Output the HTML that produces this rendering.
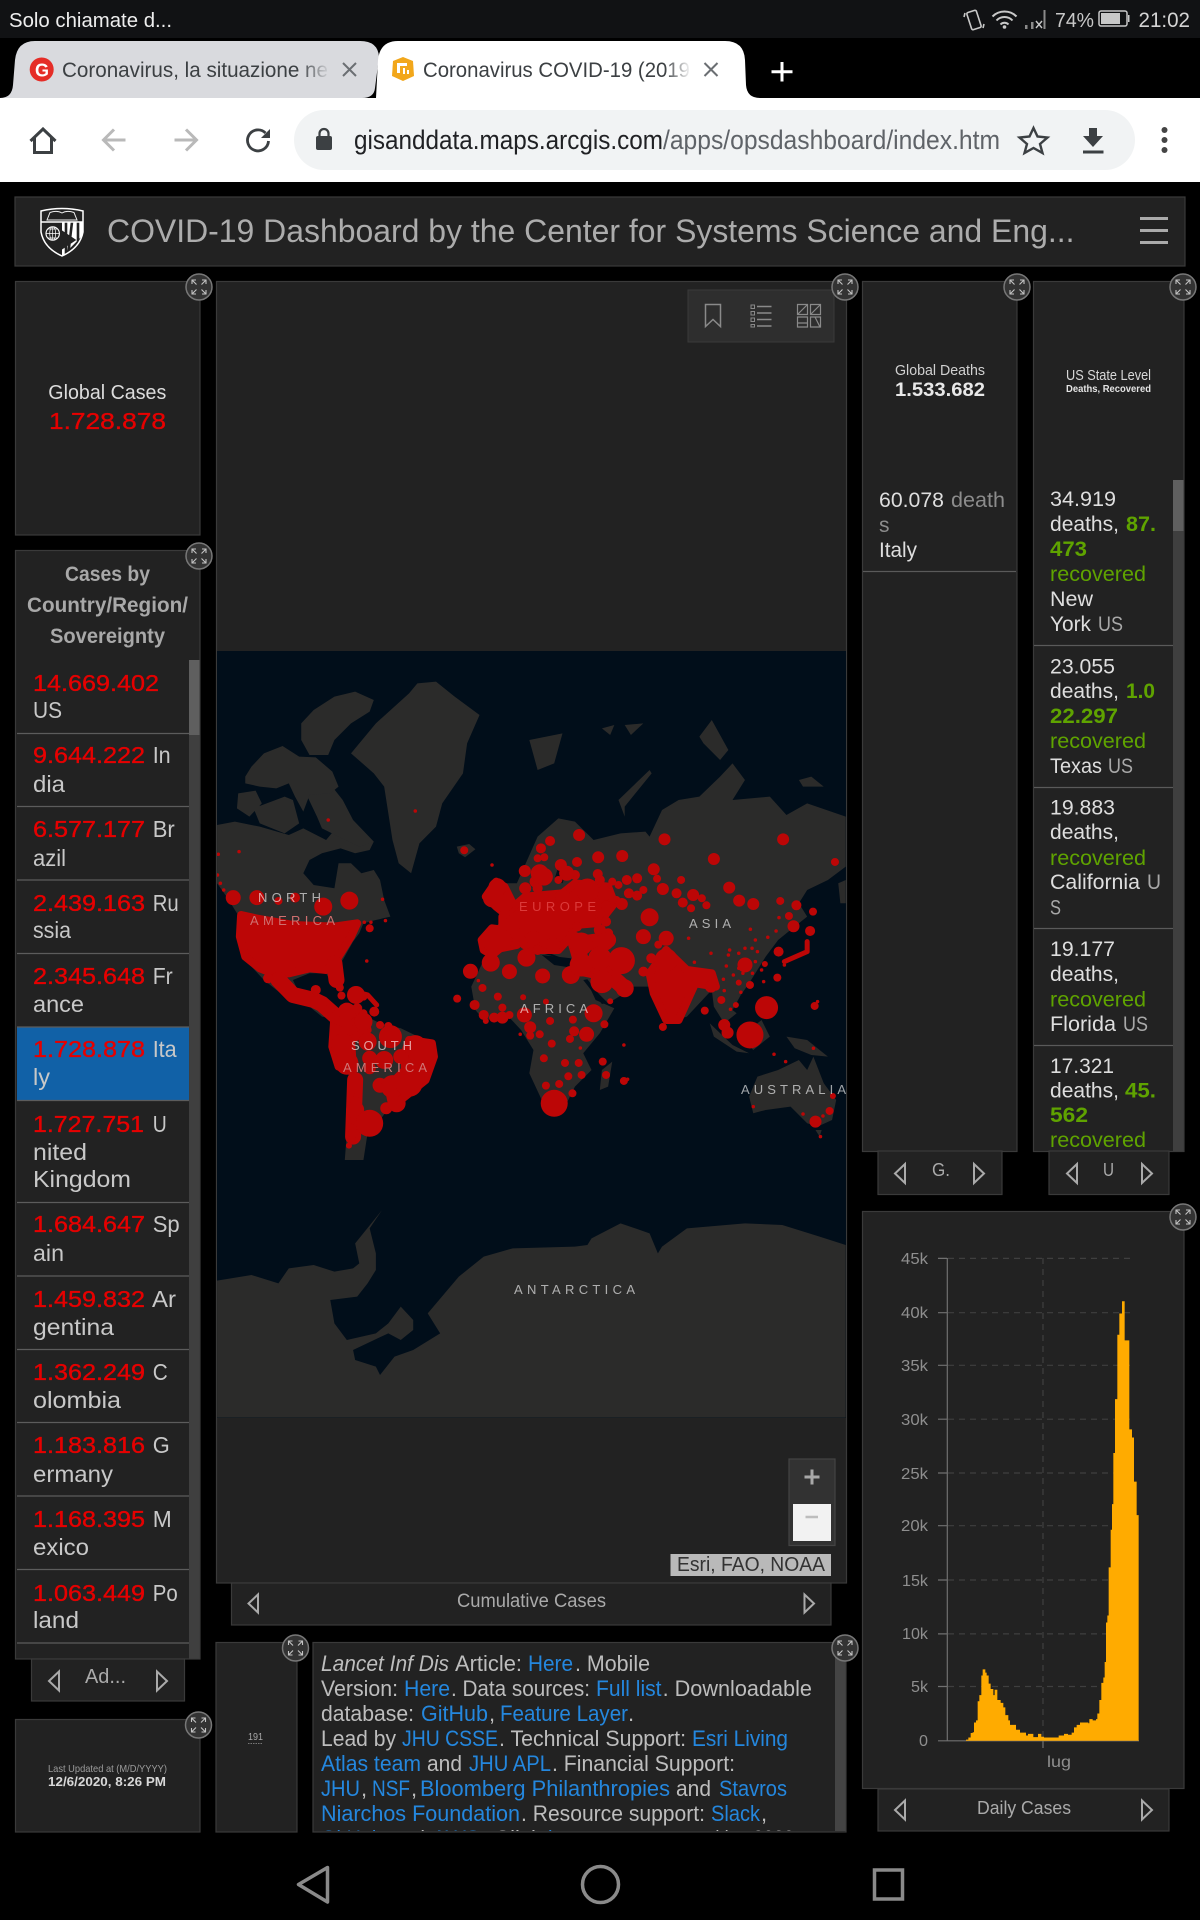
<!DOCTYPE html>
<html lang="it"><head><meta charset="utf-8"><title>COVID-19 Dashboard</title>
<style>
html,body{margin:0;padding:0;background:#000;width:1200px;height:1920px;overflow:hidden}
svg{display:block;position:absolute;left:0;top:0}
text{font-family:"Liberation Sans",sans-serif}
.p{fill:#222;stroke:#3a3a3a;stroke-width:1.2}
.n{font-size:23px;fill:#e60000;stroke:#e60000;stroke-width:.35}
.c{font-size:23px;fill:#c8c8c8}
.w{font-size:21px;fill:#dedede}
.g{font-size:21px;fill:#5fa300}
.gb{font-size:21px;fill:#5fa300;font-weight:bold}
.d{font-size:21px;fill:#a8a8a8}
.t{font-size:22px;fill:#bdbdbd}
.a{font-size:22px;fill:#2487de}
.l{font-size:13px;fill:rgba(255,255,255,.62)}
.y{font-size:16px;fill:#8f8f8f}
.ar{fill:none;stroke:#aaa;stroke-width:2}
.dots path{fill:none;stroke:#bc0606;stroke-linecap:round;stroke-linejoin:round;vector-effect:non-scaling-stroke}
</style></head><body>
<svg width="1200" height="1920" viewBox="0 0 1200 1920" xmlns="http://www.w3.org/2000/svg">
<defs>
<g id="ex"><circle r="13" fill="#333" stroke="#777" stroke-width="1.5"/><path d="M-2.5-2.5L-7-7M-7-3V-7H-3M2.5-2.5L7-7M3-7H7V-3M-2.5 2.5L-7 7M-7 3V7H-3M2.5 2.5L7 7M3 7H7V3" fill="none" stroke="#c4c4c4" stroke-width="1.1"/></g>
<clipPath id="mc"><rect x="217" y="651" width="629" height="767"/></clipPath>
<clipPath id="lc"><rect x="16" y="660" width="173" height="999"/></clipPath>
<clipPath id="uc"><rect x="1034" y="480" width="139" height="671"/></clipPath>
<clipPath id="tc"><rect x="314" y="1644" width="521" height="187"/></clipPath>
<clipPath id="sh"><path d="M41 211Q62 206 83 211L83 232Q80 248 62 256Q44 248 41 232Z"/></clipPath>
<linearGradient id="f1"><stop offset="0" stop-color="#d9dade" stop-opacity="0"/><stop offset="1" stop-color="#d9dade"/></linearGradient>
<linearGradient id="f2"><stop offset="0" stop-color="#fff" stop-opacity="0"/><stop offset="1" stop-color="#fff"/></linearGradient>
</defs>

<!-- status bar -->
<rect width="1200" height="38" fill="#111214"/>
<text x="9" y="27" font-size="20" fill="#eee" textLength="163" lengthAdjust="spacingAndGlyphs">Solo chiamate d...</text>
<g fill="none" stroke="#c8c8c8" stroke-width="1.6">
<rect x="969" y="11" width="10" height="18" rx="1.5" transform="rotate(-18 974 20)"/>
<path d="M965 13l-1 4M984 24l-1 4"/>
<path d="M992.5 16.5a17 17 0 0 1 24 0M996.5 20.5a11 11 0 0 1 16 0M1000.5 24.5a5.500 5.500 0 0 1 8 0" stroke-width="2"/>
</g>
<circle cx="1004.500" cy="27" r="1.800" fill="#c8c8c8"/>
<path d="M1025 25h2.500v4H1025zM1031 22h2.500v7H1031zM1043.500 10h2v19h-2z" fill="#8a8a8a"/>
<path d="M1036 21l6 7M1042 21l-6 7" stroke="#c8c8c8" stroke-width="1.400"/>
<text x="1055" y="27" font-size="20" fill="#c8c8c8" textLength="39" lengthAdjust="spacingAndGlyphs">74%</text>
<rect x="1099" y="11" width="28" height="15" rx="2" fill="none" stroke="#c8c8c8" stroke-width="1.500"/>
<rect x="1101" y="13" width="19" height="11" fill="#c8c8c8"/><rect x="1128" y="15" width="1.500" height="7" fill="#c8c8c8"/>
<text x="1138.500" y="27" font-size="21" fill="#d4d4d4" textLength="51.500" lengthAdjust="spacingAndGlyphs">21:02</text>

<!-- tabs -->
<path d="M0 98Q12 98 13 85L15 60Q17 41 35 41L360 41Q378 41 379 57L375 88Q374 98 362 98Z" fill="#d9dade"/>
<circle cx="41.700" cy="69.500" r="12" fill="#e52d27"/>
<text x="35" y="76.500" font-size="18" font-weight="bold" fill="#fff">G</text>
<text x="62" y="77" font-size="21.500" fill="#3c4043" textLength="266" lengthAdjust="spacingAndGlyphs">Coronavirus, la situazione ne</text>
<rect x="300" y="55" width="30" height="30" fill="url(#f1)"/>
<path d="M343 63l13 13M356 63l-13 13" stroke="#6b6f73" stroke-width="2"/>
<path d="M376 98L378 60Q380 41 398 41L725 41Q744 41 745 60L746 85Q747 98 760 98Z" fill="#fff"/>
<polygon points="403,57 413,61 414,76 403,81 392,76 393,61" fill="#f2a71b"/>
<path d="M397 63h10v3h-7v7h-3zM403 68h2v6h-2zM407 70h2v4h-2z" fill="#fff"/>
<text x="423" y="77" font-size="21.500" fill="#3c4043" textLength="267" lengthAdjust="spacingAndGlyphs">Coronavirus COVID-19 (2019</text>
<rect x="665" y="55" width="26" height="30" fill="url(#f2)"/>
<path d="M704.500 63l13 13M717.500 63l-13 13" stroke="#6b6f73" stroke-width="2"/>
<path d="M782 62v19.500M771.500 71.700h21" stroke="#fff" stroke-width="3"/>

<!-- toolbar -->
<rect y="98" width="1200" height="84" fill="#fff"/>
<path d="M30.500 141L43 129L55.500 141" fill="none" stroke="#3c4043" stroke-width="3"/>
<path d="M34.500 138V152.500H51.500V138" fill="none" stroke="#3c4043" stroke-width="3"/>
<path d="M125.500 140H105M114 129.500L103.500 140L114 150.500" fill="none" stroke="#b9b9b9" stroke-width="3"/>
<path d="M174.500 140H195M186 129.500L196.500 140L186 150.500" fill="none" stroke="#b9b9b9" stroke-width="3"/>
<path d="M265.500 133A10.500 10.500 0 1 0 268.500 141" fill="none" stroke="#3c4043" stroke-width="2.800"/>
<path d="M270 129v9h-9z" fill="#3c4043"/>
<rect x="294" y="110" width="841" height="60" rx="30" fill="#f1f3f4"/>
<rect x="316" y="136" width="16" height="14" rx="2" fill="#3c4043"/>
<path d="M319.500 136v-2.500a4.500 4.500 0 0 1 9 0V136" fill="none" stroke="#3c4043" stroke-width="2.200"/>
<text x="354" y="149" font-size="27" fill="#202124" textLength="309" lengthAdjust="spacingAndGlyphs">gisanddata.maps.arcgis.com</text>
<text x="663" y="149" font-size="27" fill="#5f6368" textLength="337" lengthAdjust="spacingAndGlyphs">/apps/opsdashboard/index.htm</text>
<polygon points="1033.500,128 1037.500,136.500 1047.500,137.500 1040,144 1042.500,153 1033.500,148 1024.500,153 1027,144 1019.500,137.500 1029.500,136.500" fill="none" stroke="#3c4043" stroke-width="2.400"/>
<path d="M1089 128h8v8h6l-10 11-10-11h6zM1083 150.500h20.500v3H1083z" fill="#3c4043"/>
<circle cx="1164.500" cy="130" r="3" fill="#444"/><circle cx="1164.500" cy="140" r="3" fill="#444"/><circle cx="1164.500" cy="150" r="3" fill="#444"/>

<!-- header -->
<rect x="15" y="197" width="1170" height="69" class="p"/>
<g clip-path="url(#sh)"><rect x="40" y="206" width="45" height="52" fill="#222"/>
<path d="M62 222h22v34H62z" fill="#fff"/>
<path d="M66 222v34M72 222l-4 34M78 222v34M62 232l12 8-12 8zM70 250l14-14v6l-12 14z" stroke="#222" stroke-width="2.600" fill="#222"/></g>
<path d="M41 211Q62 206 83 211L83 232Q80 248 62 256Q44 248 41 232Z" fill="none" stroke="#fff" stroke-width="1.500"/>
<path d="M41 222H83" stroke="#fff" stroke-width="1.500"/>
<path d="M47 220L50 212.500Q57 210 62 213Q67 210 74 212.500L77 220Z" fill="#222" stroke="#eee" stroke-width="1"/>
<circle cx="52.700" cy="233.500" r="6.700" fill="none" stroke="#fff" stroke-width="1.100"/>
<path d="M46 233.500h13.400M52.700 226.800v13.400M48 229h9.400M48 238h9.400" stroke="#fff" stroke-width=".7"/>
<ellipse cx="52.700" cy="233.500" rx="3" ry="6.700" fill="none" stroke="#fff" stroke-width=".7"/>
<text x="107" y="242" font-size="32" fill="#acacac" textLength="967.500" lengthAdjust="spacingAndGlyphs">COVID-19 Dashboard by the Center for Systems Science and Eng...</text>
<path d="M1140 218.500h28M1140 230.500h28M1140 242.500h28" stroke="#aaa" stroke-width="3"/>

<!-- global cases -->
<rect x="15.500" y="281.500" width="184.500" height="253.500" class="p"/>
<text x="48.300" y="399" font-size="20" fill="#dcdcdc" textLength="118" lengthAdjust="spacingAndGlyphs">Global Cases</text>
<text x="49" y="429" class="n" font-size="24" textLength="117" lengthAdjust="spacingAndGlyphs">1.728.878</text>

<!-- left list -->
<rect x="15.500" y="550.500" width="184.500" height="1108.500" class="p"/>
<text x="65" y="581" font-size="21" font-weight="bold" fill="#a8a8a8" textLength="85" lengthAdjust="spacingAndGlyphs">Cases by</text>
<text x="27" y="612" font-size="21" font-weight="bold" fill="#a8a8a8" textLength="161" lengthAdjust="spacingAndGlyphs">Country/Region/</text>
<text x="50" y="643" font-size="21" font-weight="bold" fill="#a8a8a8" textLength="115" lengthAdjust="spacingAndGlyphs">Sovereignty</text>
<rect x="189" y="660" width="10.500" height="998.500" fill="#3f3f3f"/><rect x="189" y="660" width="10.500" height="75" fill="#5f5f5f"/>
<rect x="17" y="1027" width="172" height="73.500" fill="#1161a7"/>
<path d="M17 733.500H189M17 806.500H189M17 880H189M17 953.500H189M17 1027H189M17 1100.500H189M17 1202.500H189M17 1276H189M17 1349.500H189M17 1422.500H189M17 1496H189M17 1569.500H189M17 1643H189" stroke="#5c5c5c" stroke-width="1.200"/>
<g clip-path="url(#lc)">
<text x="33" y="691" class="n" textLength="126" lengthAdjust="spacingAndGlyphs">14.669.402</text><text x="33" y="718" class="c" textLength="29" lengthAdjust="spacingAndGlyphs">US</text>
<text x="33" y="763" class="n" textLength="112" lengthAdjust="spacingAndGlyphs">9.644.222</text><text x="152.700" y="763" class="c" textLength="18" lengthAdjust="spacingAndGlyphs">In</text><text x="33" y="792" class="c" textLength="32" lengthAdjust="spacingAndGlyphs">dia</text>
<text x="33" y="837" class="n" textLength="112" lengthAdjust="spacingAndGlyphs">6.577.177</text><text x="152.700" y="837" class="c" textLength="22" lengthAdjust="spacingAndGlyphs">Br</text><text x="33" y="866" class="c" textLength="33" lengthAdjust="spacingAndGlyphs">azil</text>
<text x="33" y="911" class="n" textLength="112" lengthAdjust="spacingAndGlyphs">2.439.163</text><text x="152.700" y="911" class="c" textLength="26" lengthAdjust="spacingAndGlyphs">Ru</text><text x="33" y="938" class="c" textLength="38" lengthAdjust="spacingAndGlyphs">ssia</text>
<text x="33" y="984" class="n" textLength="112" lengthAdjust="spacingAndGlyphs">2.345.648</text><text x="152.700" y="984" class="c" textLength="20" lengthAdjust="spacingAndGlyphs">Fr</text><text x="33" y="1012" class="c" textLength="51" lengthAdjust="spacingAndGlyphs">ance</text>
<text x="33" y="1057" class="n" textLength="112" lengthAdjust="spacingAndGlyphs">1.728.878</text><text x="152.700" y="1057" class="c" textLength="24" lengthAdjust="spacingAndGlyphs">Ita</text><text x="33" y="1085" class="c" textLength="17" lengthAdjust="spacingAndGlyphs">ly</text>
<text x="33" y="1132" class="n" textLength="111" lengthAdjust="spacingAndGlyphs">1.727.751</text><text x="152.700" y="1132" class="c" textLength="14" lengthAdjust="spacingAndGlyphs">U</text><text x="33" y="1160" class="c" textLength="54" lengthAdjust="spacingAndGlyphs">nited</text><text x="33" y="1187" class="c" textLength="98" lengthAdjust="spacingAndGlyphs">Kingdom</text>
<text x="33" y="1232" class="n" textLength="112" lengthAdjust="spacingAndGlyphs">1.684.647</text><text x="152.700" y="1232" class="c" textLength="27" lengthAdjust="spacingAndGlyphs">Sp</text><text x="33" y="1261" class="c" textLength="31" lengthAdjust="spacingAndGlyphs">ain</text>
<text x="33" y="1307" class="n" textLength="112" lengthAdjust="spacingAndGlyphs">1.459.832</text><text x="152" y="1307" class="c" textLength="24" lengthAdjust="spacingAndGlyphs">Ar</text><text x="33" y="1335" class="c" textLength="81" lengthAdjust="spacingAndGlyphs">gentina</text>
<text x="33" y="1380" class="n" textLength="112" lengthAdjust="spacingAndGlyphs">1.362.249</text><text x="152.700" y="1380" class="c" textLength="15" lengthAdjust="spacingAndGlyphs">C</text><text x="33" y="1408" class="c" textLength="88" lengthAdjust="spacingAndGlyphs">olombia</text>
<text x="33" y="1453" class="n" textLength="112" lengthAdjust="spacingAndGlyphs">1.183.816</text><text x="152.700" y="1453" class="c" textLength="17" lengthAdjust="spacingAndGlyphs">G</text><text x="33" y="1482" class="c" textLength="80" lengthAdjust="spacingAndGlyphs">ermany</text>
<text x="33" y="1527" class="n" textLength="112" lengthAdjust="spacingAndGlyphs">1.168.395</text><text x="152.700" y="1527" class="c" textLength="19" lengthAdjust="spacingAndGlyphs">M</text><text x="33" y="1555" class="c" textLength="56" lengthAdjust="spacingAndGlyphs">exico</text>
<text x="33" y="1601" class="n" textLength="112" lengthAdjust="spacingAndGlyphs">1.063.449</text><text x="152.700" y="1601" class="c" textLength="25" lengthAdjust="spacingAndGlyphs">Po</text><text x="33" y="1628" class="c" textLength="46" lengthAdjust="spacingAndGlyphs">land</text>
<text x="33" y="1675" class="n" textLength="112" lengthAdjust="spacingAndGlyphs">1.040.547</text><text x="152.700" y="1675" class="c">I</text>
</g>
<rect x="31.500" y="1659" width="153" height="42" class="p"/>
<path d="M59 1671.500L49 1681L59 1690.500ZM157 1671.500L167 1681L157 1690.500Z" class="ar"/>
<text x="85" y="1683" font-size="20" fill="#aaa" textLength="41" lengthAdjust="spacingAndGlyphs">Ad...</text>

<!-- last updated -->
<rect x="15.500" y="1719.500" width="184.500" height="112.500" class="p"/>
<text x="48" y="1772" font-size="10.500" fill="#9c9c9c" textLength="119" lengthAdjust="spacingAndGlyphs">Last Updated at (M/D/YYYY)</text>
<text x="48" y="1786" font-size="12.500" font-weight="bold" fill="#d8d8d8" textLength="118" lengthAdjust="spacingAndGlyphs">12/6/2020, 8:26 PM</text>

<!-- map panel -->
<rect x="216.500" y="281.500" width="630" height="1301.500" class="p"/>
<rect x="217" y="651" width="629" height="767" fill="#010e1a"/>
<g clip-path="url(#mc)">
<g transform="translate(210 640) scale(.4147 .3333)" fill="#2b2b2a">
<path d="M17 555L60 545 120 560 190 585 225 565 280 600 300 570 340 590 395 605 385 630 350 640 315 625 270 640 240 660 225 700 250 735 300 745 310 670 340 670 365 700 395 690 410 720 420 780 435 830 400 840 370 850 360 880 345 905 320 960 300 990 320 1025 295 1035 280 1000 240 1000 200 1020 215 1060 250 1080 290 1105 330 1105 370 1125 410 1150 460 1165 510 1195 540 1230 520 1320 480 1360 440 1390 410 1440 380 1480 370 1560 325 1560 330 1480 335 1400 345 1320 300 1260 290 1215 310 1140 270 1130 220 1080 170 1060 130 1020 85 960 70 900 70 830 40 770 17 730Z"/>
<path d="M220 250L250 210 300 170 350 155 395 180 385 215 340 250 300 300 285 345 240 345 220 300Z"/>
<path d="M235 470L285 425 320 480 345 540 395 605 360 620 310 590 270 565 258 530Z"/>
<path d="M68 460L110 452 125 490 95 530 65 505ZM105 505L180 470 200 480 215 550 180 580 120 550ZM85 410L100 380 130 340 175 318 215 350 255 352 295 395 310 440 290 460 240 465 225 515 205 470 190 430 160 445 120 440 85 430Z"/>
<path d="M340 340L400 250 480 160 500 130 545 125 590 170 650 225 620 310 610 400 560 490 545 560 505 610 485 700 455 670 440 600 420 440 395 400Z"/>
<path d="M595 620L625 612 640 628 615 652 600 640Z"/>
<path d="M740 730L790 590 840 535 880 545 925 600 990 580 1050 575 1060 590 1090 510 1130 480 1180 470 1230 410 1260 370 1290 420 1260 480 1350 470 1390 525 1440 490 1533 530 1533 680 1490 720 1440 750 1420 790 1440 830 1390 880 1370 900 1340 950 1320 990 1300 1030 1280 1065 1260 1110 1270 1120 1240 1150 1215 1100 1210 1050 1150 1130 1100 1150 1080 1040 1020 1040 1000 1060 960 1090 920 1040 890 1000 860 960 800 930 700 940 680 950 660 920 690 860 730 800 665 790 680 730Z"/>
<path d="M630 1040L660 960 720 930 800 940 860 960 900 1000 930 1080 975 1105 940 1180 900 1240 920 1290 880 1340 860 1390 830 1420 800 1380 770 1300 780 1230 750 1170 720 1130 660 1140 640 1110Z"/>
<path d="M945 1290L970 1265 960 1340 940 1350Z"/>
<path d="M1300 1370L1320 1310 1370 1290 1420 1260 1440 1290 1455 1250 1480 1330 1510 1380 1500 1440 1465 1460 1440 1450 1400 1400 1340 1410 1310 1420ZM1460 1470H1475L1470 1490Z"/>
<path d="M1390 1190L1440 1200 1490 1250 1450 1245 1410 1225Z"/>
<path d="M1205 1150L1260 1215 1300 1240 1270 1235 1215 1190ZM1280 1190L1330 1140 1350 1190 1310 1230Z"/>
<path d="M770 300L850 280 830 370 790 390ZM1180 290L1210 240 1250 330 1230 360 1190 310ZM985 480L1060 390 1065 400 1000 500 1000 530ZM945 265L975 255 965 285ZM1000 255L1045 250 1015 285ZM1420 420L1450 410 1480 440 1430 440ZM1515 730L1533 720V790H1520Z"/>
<path d="M800 945L870 955 880 985 830 975ZM900 1020L910 1018 955 1090 945 1092ZM840 680L860 690 850 730 830 720Z" fill="#010e1a"/>
</g>
<g class="dots" transform="translate(210 640) scale(.4147 .3333)">
<path stroke-width="8" style="fill:#bc0606" d="M75 825L110 835 200 855 300 860 355 850 340 890 320 930 300 970 280 990 240 985 190 1000 160 1005 120 985 85 950 72 890ZM705 830L760 770 850 760 880 730 960 740 975 790 950 830 930 850 880 855 870 890 840 930 780 930 745 890 705 870ZM665 770L690 725 710 740 730 790 710 820 690 800ZM655 900L680 865 740 875 740 915 700 925 680 945 660 930ZM1060 1000L1100 930 1150 990 1210 1000 1220 1040 1170 1030 1130 1140 1100 1140 1070 1060ZM300 1130L370 1120 380 1170 340 1200 345 1290 310 1280 295 1220ZM480 1200L535 1210 540 1250 520 1320 470 1370 440 1400 430 1340 470 1290 470 1240Z"/>
<path stroke-width="16" d="M165 1020L200 1065 250 1080 270 1092 300 1125 330 1140M300 970L305 1020M350 1320L345 1490M880 900L900 985 960 1000 1000 1045M900 910L960 900"/>
<path stroke-width="5" d="M340 1052L380 1065 402 1095M1385 965L1440 935 1440 905"/>
<path stroke-width="3.500" d="M20 643h.1M70 635h.1M285 540h.1M495 513h.1M680 675h.1M416 778h.1M423 842h.1M378 963h.1M372 847h.1M388 847h.1M18 705h.1M25 730h.1M33 750h.1M1303 868h.1M1345 892h.1M1365 873h.1M1372 833h.1M1315 900h.1M1290 925h.1M1307 925h.1M1253 930h.1M1275 940h.1M1250 945h.1M1208 940h.1M1168 967h.1M1320 935h.1M1315 965h.1M1330 990h.1M1275 985h.1M1245 978h.1M1262 1005h.1M1285 1000h.1M1308 1000h.1M1238 1018h.1M1240 1052h.1M1280 1057h.1M1335 1025h.1M1255 1108h.1M1360 1243h.1M1388 1265h.1M1455 1225h.1M1465 1085h.1M1310 1400h.1M1430 1422h.1M1478 1428h.1M1472 1490h.1M1385 975h.1M647 1022h.1M893 1224h.1M748 1183h.1M998 1215h.1M1007 1318h.1M1154 895h.1"/>
<path stroke-width="6" d="M1338 972h.1M1275 1028h.1M1268 1095h.1M1502 1368h.1M755 1072h.1M810 1085h.1M965 1084h.1M665 1143h.1M335 1517h.1M353 1367h.1"/>
<path stroke-width="8" d="M1454 815h.1M1396 828h.1M1375 783h.1M1368 1013h.1M1302 1035h.1M1233 1080h.1M1193 1112h.1M1092 1161h.1M1507 666h.1M1458 1098h.1M1494 1413h.1M317 1067h.1M313 1043h.1M410 1155h.1M430 1158h.1M370 1070h.1M657 1044h.1M596 1076h.1M694 1070h.1M705 1103h.1M820 1143h.1M875 1139h.1M951 1153h.1M772 1187h.1M795 1183h.1M868 1197h.1M824 1211h.1M805 1255h.1M856 1269h.1M889 1269h.1M864 1309h.1M896 1305h.1M842 1332h.1M810 1337h.1M874 1360h.1M947 1265h.1M955 1305h.1M998 1323h.1M722 1125h.1M790 655h.1M806 652h.1M840 720h.1M970 725h.1M985 735h.1M1045 750h.1M980 780h.1M1078 716h.1M1136 720h.1M1160 805h.1M1186 775h.1M1197 796h.1M1081 914h.1M613 631h.1M165 783h.1M385 865h.1"/>
<path stroke-width="10" d="M1030 715h.1M1005 720h.1M1125 760h.1M1140 788h.1M1414 796h.1M1371 935h.1M1064 955h.1M638 1095h.1M878 1174h.1M685 1133h.1M660 1125h.1M350 1440h.1M345 1480h.1M396 1115h.1M355 1105h.1M820 603h.1M798 625h.1M885 666h.1M880 705h.1M935 702h.1M940 720h.1M790 745h.1M1010 760h.1M1030 767h.1M955 797h.1M940 820h.1M885 860h.1M955 845h.1M960 880h.1M790 930h.1M205 773h.1M1447 873h.1M1045 995h.1M255 1050h.1M290 1105h.1M140 1015h.1"/>
<path stroke-width="12" d="M890 585h.1M1092 747h.1M1252 743h.1M1215 657h.1M1382 598h.1M1096 598h.1M994 648h.1M936 652h.1M1070 688h.1M1165 765h.1M1276 782h.1M1310 792h.1M1407 859h.1M1240 1155h.1M1248 1178h.1M1208 1040h.1M1460 1445h.1M846 675h.1M759 693h.1M785 725h.1M760 745h.1M993 792h.1M940 870h.1M760 910h.1M772 1162h.1M705 1133h.1M385 1285h.1M425 1405h.1"/>
<path stroke-width="15" d="M56 773h.1M113 773h.1M628 994h.1M802 1008h.1M1045 890h.1M1100 895h.1M1290 975h.1M722 995h.1M908 1183h.1M758 1125h.1M410 1336h.1M460 1250h.1M385 1255h.1M860 700h.1M950 760h.1M780 895h.1M850 770h.1M827 915h.1"/>
<path stroke-width="18" d="M677 968h.1M763 953h.1M1060 832h.1M336 782h.1M273 800h.1M925 1120h.1M870 1005h.1M1000 1045h.1M952 905h.1M680 775h.1M693 742h.1M710 790h.1M370 1145h.1M352 1065h.1M330 1115h.1M420 1260h.1M380 1205h.1M450 1390h.1M350 1410h.1M500 1310h.1M795 700h.1M805 710h.1"/>
<path stroke-width="23" d="M1342 1103h.1M945 1025h.1M895 912h.1M895 975h.1M940 955h.1M683 900h.1M700 900h.1M435 1190h.1M320 1215h.1M495 1220h.1M330 1270h.1M440 1340h.1M910 750h.1M1100 960h.1"/>
<path stroke-width="27" d="M385 1450h.1M830 1390h.1M1302 1185h.1M992 962h.1M510 1235h.1M480 1330h.1"/>
</g>
<g transform="translate(210 1150) scale(.4147 .3333)" fill="#2b2b2a">
<path d="M17 392L100 375 165 400 190 355 250 345 300 365 345 355 360 340 350 280 415 180 385 235 400 310 400 360 380 400 355 440 290 450 300 520 330 570 400 550 430 520 460 470 490 510 490 540 460 570 430 550 345 600 350 630 400 650 410 675 445 620 490 600 555 550 525 490 600 380 660 320 730 295 880 290 910 285 920 265 990 220 1060 250 1080 310 1090 290 1150 235 1290 220 1380 225 1470 260 1533 285V803H17Z"/>
</g>
<text x="258" y="902" class="l" textLength="63">NORTH</text>
<text x="250" y="925" class="l" style="fill:#cf6f6f" textLength="85">AMERICA</text>
<text x="519" y="911" class="l" style="fill:#dc3a3a" textLength="77">EUROPE</text>
<text x="689" y="928" class="l" textLength="42">ASIA</text>
<text x="520" y="1013" class="l" textLength="68">AFRICA</text>
<text x="351" y="1050" class="l" textLength="61">SOUTH</text>
<text x="343" y="1072" class="l" style="fill:#cf7575" textLength="84">AMERICA</text>
<text x="741" y="1094" class="l" textLength="105">AUSTRALIA</text>
<text x="514" y="1294" class="l" textLength="121">ANTARCTICA</text>
</g>
<!-- map widgets -->
<rect x="688" y="290" width="146" height="52" fill="#2e2e2e" stroke="#3a3a3a"/>
<path d="M705.500 304.500h15v22l-7.500-7-7.500 7z" fill="none" stroke="#8a8a8a" stroke-width="1.500"/>
<path d="M757 306.500h14.500M757 313h14.500M757 319.500h14.500M757 326h14.500" stroke="#8a8a8a" stroke-width="1.500"/>
<path d="M751 305h3.500v3.500H751zM751 311.500h3.500v3.500H751zM751 318h3.500v3.500H751zM751 324.500h3.500v2.500H751z" fill="none" stroke="#8a8a8a"/>
<path d="M797.500 304.500h10v10h-10zM810.500 304.500h10v10h-10zM797.500 317h10v10h-10zM810.500 317h10v10h-10zM797.500 314.500l10-10M810.500 314.500l10-10M797.500 323h10M815 317l5 10" fill="none" stroke="#8a8a8a" stroke-width="1.200"/>
<rect x="789" y="1459" width="46" height="86.500" fill="#323232" stroke="#444" stroke-width="1.200"/>
<path d="M804.500 1477h15M812 1469.500v15" stroke="#a8a8a8" stroke-width="3"/>
<rect x="793" y="1504" width="38" height="37" fill="#f2f2f2"/>
<path d="M805.500 1517h12.500" stroke="#bdbdbd" stroke-width="2.500"/>
<rect x="670.500" y="1554" width="160.500" height="22" fill="#b9b9b9"/>
<text x="677" y="1571" font-size="20" fill="#333" textLength="148" lengthAdjust="spacingAndGlyphs">Esri, FAO, NOAA</text>
<rect x="231.500" y="1583" width="599.500" height="42" class="p"/>
<path d="M258 1594.500L248.500 1603.500L258 1612.500ZM804.500 1594.500L814 1603.500L804.500 1612.500Z" class="ar"/>
<text x="457" y="1607" font-size="19" fill="#aaa" textLength="149" lengthAdjust="spacingAndGlyphs">Cumulative Cases</text>

<!-- deaths panel -->
<rect x="862.500" y="281.500" width="154.500" height="870" class="p"/>
<text x="895" y="375" font-size="14.500" fill="#d0d0d0" textLength="90" lengthAdjust="spacingAndGlyphs">Global Deaths</text>
<text x="895" y="396" font-size="19" font-weight="bold" fill="#e8e8e8" textLength="90" lengthAdjust="spacingAndGlyphs">1.533.682</text>
<text x="879" y="507" class="w" textLength="65" lengthAdjust="spacingAndGlyphs">60.078</text>
<text x="951" y="507" font-size="21" fill="#8c8c8c" textLength="54" lengthAdjust="spacingAndGlyphs">death</text>
<text x="879" y="532" font-size="21" fill="#8c8c8c">s</text>
<text x="879" y="557" class="w" textLength="38" lengthAdjust="spacingAndGlyphs">Italy</text>
<path d="M863 571.500H1016" stroke="#5a5a5a" stroke-width="1.200"/>
<rect x="878" y="1151" width="124" height="43.500" class="p"/>
<path d="M905 1164L895 1173.500L905 1183ZM974 1164L984 1173.500L974 1183Z" class="ar"/>
<text x="932" y="1176" font-size="18" fill="#aaa" textLength="18" lengthAdjust="spacingAndGlyphs">G.</text>

<!-- US panel -->
<rect x="1033.500" y="281.500" width="150.500" height="870" class="p"/>
<text x="1066" y="380" font-size="14.500" fill="#d8d8d8" textLength="85" lengthAdjust="spacingAndGlyphs">US State Level</text>
<text x="1066" y="392" font-size="10" font-weight="bold" fill="#e4e4e4" textLength="85" lengthAdjust="spacingAndGlyphs">Deaths, Recovered</text>
<rect x="1173" y="480" width="10.500" height="671" fill="#3f3f3f"/><rect x="1173" y="480" width="10.500" height="51" fill="#5f5f5f"/>
<path d="M1034 645.500H1173M1034 787.500H1173M1034 928.500H1173M1034 1045.500H1173" stroke="#5a5a5a" stroke-width="1.200"/>
<g clip-path="url(#uc)">
<text x="1050" y="506" class="w" textLength="66" lengthAdjust="spacingAndGlyphs">34.919</text>
<text x="1050" y="531" class="w" textLength="69" lengthAdjust="spacingAndGlyphs">deaths,</text><text x="1126" y="531" class="gb" textLength="30" lengthAdjust="spacingAndGlyphs">87.</text>
<text x="1050" y="556" class="gb" textLength="37" lengthAdjust="spacingAndGlyphs">473</text>
<text x="1050" y="581" class="g" textLength="96" lengthAdjust="spacingAndGlyphs">recovered</text>
<text x="1050" y="606" class="w" textLength="43" lengthAdjust="spacingAndGlyphs">New</text>
<text x="1050" y="631" class="w" textLength="41" lengthAdjust="spacingAndGlyphs">York</text><text x="1098" y="631" class="d" textLength="25" lengthAdjust="spacingAndGlyphs">US</text>
<text x="1050" y="673.500" class="w" textLength="65" lengthAdjust="spacingAndGlyphs">23.055</text>
<text x="1050" y="698" class="w" textLength="69" lengthAdjust="spacingAndGlyphs">deaths,</text><text x="1126" y="698" class="gb" textLength="29" lengthAdjust="spacingAndGlyphs">1.0</text>
<text x="1050" y="723" class="gb" textLength="68" lengthAdjust="spacingAndGlyphs">22.297</text>
<text x="1050" y="748" class="g" textLength="96" lengthAdjust="spacingAndGlyphs">recovered</text>
<text x="1050" y="773" class="w" textLength="52" lengthAdjust="spacingAndGlyphs">Texas</text><text x="1108" y="773" class="d" textLength="25" lengthAdjust="spacingAndGlyphs">US</text>
<text x="1050" y="814.500" class="w" textLength="65" lengthAdjust="spacingAndGlyphs">19.883</text>
<text x="1050" y="839" class="w" textLength="69" lengthAdjust="spacingAndGlyphs">deaths,</text>
<text x="1050" y="865" class="g" textLength="96" lengthAdjust="spacingAndGlyphs">recovered</text>
<text x="1050" y="889" class="w" textLength="90" lengthAdjust="spacingAndGlyphs">California</text><text x="1147" y="889" class="d" textLength="14" lengthAdjust="spacingAndGlyphs">U</text>
<text x="1050" y="914.500" class="d" textLength="11" lengthAdjust="spacingAndGlyphs">S</text>
<text x="1050" y="956" class="w" textLength="65" lengthAdjust="spacingAndGlyphs">19.177</text>
<text x="1050" y="981" class="w" textLength="69" lengthAdjust="spacingAndGlyphs">deaths,</text>
<text x="1050" y="1006.500" class="g" textLength="96" lengthAdjust="spacingAndGlyphs">recovered</text>
<text x="1050" y="1031" class="w" textLength="66" lengthAdjust="spacingAndGlyphs">Florida</text><text x="1123" y="1031" class="d" textLength="25" lengthAdjust="spacingAndGlyphs">US</text>
<text x="1050" y="1073" class="w" textLength="64" lengthAdjust="spacingAndGlyphs">17.321</text>
<text x="1050" y="1097.500" class="w" textLength="69" lengthAdjust="spacingAndGlyphs">deaths,</text><text x="1125" y="1097.500" class="gb" textLength="31" lengthAdjust="spacingAndGlyphs">45.</text>
<text x="1050" y="1122" class="gb" textLength="38" lengthAdjust="spacingAndGlyphs">562</text>
<text x="1050" y="1147" class="g" textLength="96" lengthAdjust="spacingAndGlyphs">recovered</text>
</g>
<rect x="1049" y="1151" width="120" height="43.500" class="p"/>
<path d="M1077 1164L1067 1173.500L1077 1183ZM1142 1164L1152 1173.500L1142 1183Z" class="ar"/>
<text x="1103" y="1176" font-size="18" fill="#aaa" textLength="11" lengthAdjust="spacingAndGlyphs">U</text>

<!-- chart -->
<rect x="862.500" y="1211.500" width="321.500" height="577" class="p"/>
<path d="M948 1258.400H1132M948 1312.700H1132M948 1365.300H1132M948 1419.200H1132M948 1473H1132M948 1525.700H1132M948 1580H1132M948 1633.900H1132M948 1686.500H1132" stroke="#3f3f3f" stroke-width="1.200" stroke-dasharray="6 5"/>
<path d="M1043 1258V1741" stroke="#3f3f3f" stroke-width="1.200" stroke-dasharray="6 5"/>
<path d="M938 1258.400H947M938 1312.700H947M938 1365.300H947M938 1419.200H947M938 1473H947M938 1525.700H947M938 1580H947M938 1633.900H947M938 1686.500H947M938 1740.800H1139M947.300 1258V1741M1043 1741V1748" stroke="#707070" stroke-width="1.200" fill="none"/>
<g transform="translate(860 1200) scale(.33333 .40816)"><path fill="#ffab00" d="M262 1325H318V1322H325V1317H332V1306H338V1304H342V1280H348V1275H353V1228H358V1213H364V1165H368V1150H376V1158H380V1165H386V1185H392V1198H400V1213H404V1200H412V1225H422V1232H430V1243H436V1262H445V1275H450V1286H468V1298H480V1305H498V1312H504V1308H520V1316H534V1308H544V1315H552V1317H596V1312H612V1308H624V1310H635V1305H642V1292H650V1286H660V1280H685V1282H688V1272H698V1275H708V1272H712V1258H718V1225H724V1183H730V1170H734V1132H738V1035H742V1018H746V900H752V808H756V745H760V620H765V488H772V330H778V278H786V248H794V344H808V562H816V582H822V690H830V772H836V1325Z"/></g>
<text x="901" y="1264" class="y" textLength="27" lengthAdjust="spacingAndGlyphs">45k</text>
<text x="901" y="1318" class="y" textLength="27" lengthAdjust="spacingAndGlyphs">40k</text>
<text x="901" y="1371" class="y" textLength="27" lengthAdjust="spacingAndGlyphs">35k</text>
<text x="901" y="1425" class="y" textLength="27" lengthAdjust="spacingAndGlyphs">30k</text>
<text x="901" y="1479" class="y" textLength="27" lengthAdjust="spacingAndGlyphs">25k</text>
<text x="901" y="1531" class="y" textLength="27" lengthAdjust="spacingAndGlyphs">20k</text>
<text x="902" y="1586" class="y" textLength="26" lengthAdjust="spacingAndGlyphs">15k</text>
<text x="902" y="1639" class="y" textLength="26" lengthAdjust="spacingAndGlyphs">10k</text>
<text x="911" y="1692" class="y" textLength="17" lengthAdjust="spacingAndGlyphs">5k</text>
<text x="919" y="1746" class="y" textLength="9" lengthAdjust="spacingAndGlyphs">0</text>
<text x="1047" y="1767" class="y" textLength="24" lengthAdjust="spacingAndGlyphs">lug</text>
<rect x="878" y="1789" width="291" height="42" class="p"/>
<path d="M905 1800.500L895 1810L905 1819.500ZM1142 1800.500L1152 1810L1142 1819.500Z" class="ar"/>
<text x="977" y="1814" font-size="18" fill="#aaa" textLength="94" lengthAdjust="spacingAndGlyphs">Daily Cases</text>

<!-- 191 panel -->
<rect x="216" y="1642.500" width="81" height="189.500" class="p"/>
<text x="248" y="1740" font-size="10" fill="#a8a8a8" textLength="15" lengthAdjust="spacingAndGlyphs">191</text>
<path d="M248 1743.500h15" stroke="#777" stroke-dasharray="1.500 1"/>

<!-- credits -->
<rect x="313" y="1642.500" width="533" height="189.500" class="p"/>
<rect x="835" y="1644" width="10.500" height="187" fill="#444"/>
<g clip-path="url(#tc)">
<text x="321" y="1671" class="t" font-style="italic" textLength="128" lengthAdjust="spacingAndGlyphs">Lancet Inf Dis</text><text x="455" y="1671" class="t" textLength="67" lengthAdjust="spacingAndGlyphs">Article:</text><text x="528" y="1671" class="a" textLength="45" lengthAdjust="spacingAndGlyphs">Here</text><text x="575" y="1671" class="t" textLength="75" lengthAdjust="spacingAndGlyphs">. Mobile</text>
<text x="321" y="1696" class="t" textLength="77" lengthAdjust="spacingAndGlyphs">Version:</text><text x="404" y="1696" class="a" textLength="46" lengthAdjust="spacingAndGlyphs">Here</text><text x="451" y="1696" class="t" textLength="139" lengthAdjust="spacingAndGlyphs">. Data sources:</text><text x="596" y="1696" class="a" textLength="65.500" lengthAdjust="spacingAndGlyphs">Full list</text><text x="662.600" y="1696" class="t" textLength="149.400" lengthAdjust="spacingAndGlyphs">. Downloadable</text>
<text x="321" y="1721" class="t" textLength="93" lengthAdjust="spacingAndGlyphs">database:</text><text x="421" y="1721" class="a" textLength="67" lengthAdjust="spacingAndGlyphs">GitHub</text><text x="489" y="1721" class="t">,</text><text x="500" y="1721" class="a" textLength="128" lengthAdjust="spacingAndGlyphs">Feature Layer</text><text x="628" y="1721" class="t">.</text>
<text x="321" y="1746" class="t" textLength="75" lengthAdjust="spacingAndGlyphs">Lead by</text><text x="402" y="1746" class="a" textLength="96" lengthAdjust="spacingAndGlyphs">JHU CSSE</text><text x="499" y="1746" class="t" textLength="187" lengthAdjust="spacingAndGlyphs">. Technical Support:</text><text x="692" y="1746" class="a" textLength="96" lengthAdjust="spacingAndGlyphs">Esri Living</text>
<text x="321" y="1771" class="a" textLength="100" lengthAdjust="spacingAndGlyphs">Atlas team</text><text x="427" y="1771" class="t" textLength="35" lengthAdjust="spacingAndGlyphs">and</text><text x="469" y="1771" class="a" textLength="82" lengthAdjust="spacingAndGlyphs">JHU APL</text><text x="552" y="1771" class="t" textLength="183" lengthAdjust="spacingAndGlyphs">. Financial Support:</text>
<text x="321" y="1796" class="a" textLength="39" lengthAdjust="spacingAndGlyphs">JHU</text><text x="361" y="1796" class="t">,</text><text x="372" y="1796" class="a" textLength="38" lengthAdjust="spacingAndGlyphs">NSF</text><text x="411" y="1796" class="t">,</text><text x="420" y="1796" class="a" textLength="250" lengthAdjust="spacingAndGlyphs">Bloomberg Philanthropies</text><text x="676" y="1796" class="t" textLength="35" lengthAdjust="spacingAndGlyphs">and</text><text x="719" y="1796" class="a" textLength="68" lengthAdjust="spacingAndGlyphs">Stavros</text>
<text x="321" y="1821" class="a" textLength="199" lengthAdjust="spacingAndGlyphs">Niarchos Foundation</text><text x="521" y="1821" class="t" textLength="184" lengthAdjust="spacingAndGlyphs">. Resource support:</text><text x="711" y="1821" class="a" textLength="49" lengthAdjust="spacingAndGlyphs">Slack</text><text x="761" y="1821" class="t">,</text>
<text x="321" y="1846" class="a" textLength="62" lengthAdjust="spacingAndGlyphs">GitHub</text><text x="390" y="1846" class="t" textLength="35" lengthAdjust="spacingAndGlyphs">and</text><text x="432" y="1846" class="a" textLength="48" lengthAdjust="spacingAndGlyphs">AWS</text><text x="482" y="1846" class="t" textLength="60" lengthAdjust="spacingAndGlyphs">. Click</text><text x="548" y="1846" class="a" textLength="40" lengthAdjust="spacingAndGlyphs">here</text><text x="594" y="1846" class="t" textLength="200" lengthAdjust="spacingAndGlyphs">to manage cookies 2020</text>
</g>

<!-- expand buttons -->
<use href="#ex" x="199" y="287"/><use href="#ex" x="199" y="556"/><use href="#ex" x="845" y="287"/><use href="#ex" x="1017" y="287"/><use href="#ex" x="1183" y="287"/><use href="#ex" x="1183" y="1217"/><use href="#ex" x="198.500" y="1725"/><use href="#ex" x="295.500" y="1648"/><use href="#ex" x="845" y="1648"/>

<!-- nav bar -->
<path d="M327.500 1867.500L298.500 1884.500L327.500 1902Z" fill="none" stroke="#8a8a8a" stroke-width="3.500" stroke-linejoin="round"/>
<circle cx="600.500" cy="1884.500" r="18" fill="none" stroke="#8a8a8a" stroke-width="3.500"/>
<rect x="874.500" y="1870" width="28" height="29" fill="none" stroke="#8a8a8a" stroke-width="3.500"/>
</svg>
</body></html>
